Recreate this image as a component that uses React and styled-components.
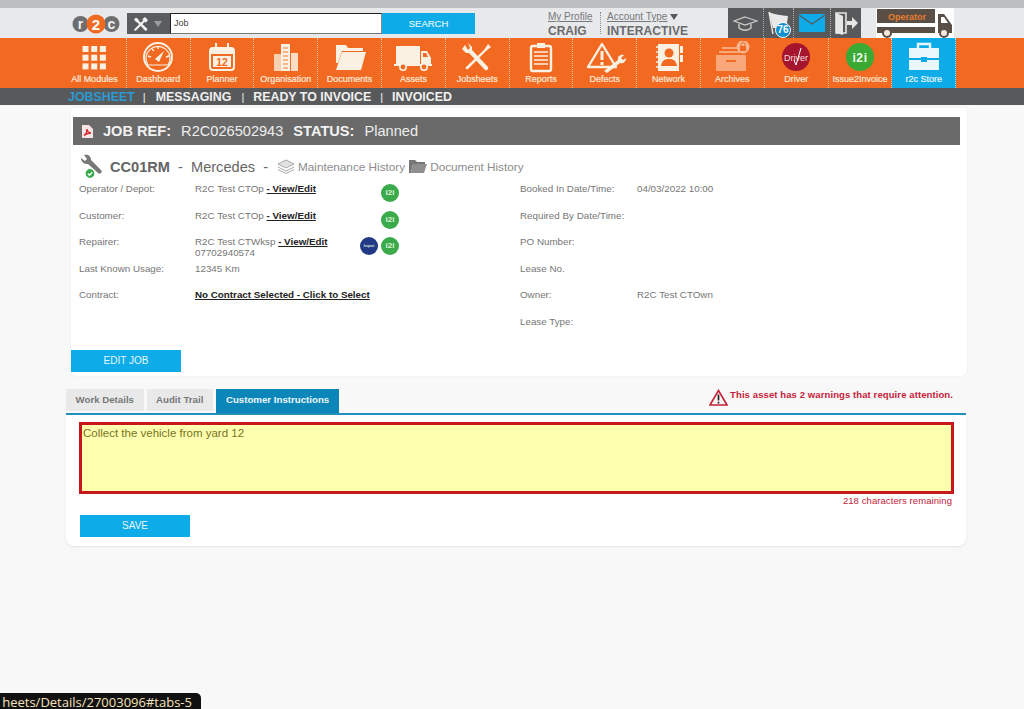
import React from "react";
import styled, { createGlobalStyle } from "styled-components";

const cream = "#fbf1e3";

const GlobalStyle = createGlobalStyle`
  html, body {
    margin: 0;
    padding: 0;
    background: #f8f8f8;
    font-family: "Liberation Sans", Arial, sans-serif;
    overflow: hidden;
  }
`;

const Page = styled.div`
  width: 1024px;
  height: 709px;
  position: relative;
  overflow: hidden;
  background: #f8f8f8;
`;

const TopStrip = styled.div`
  height: 8px;
  background: #bdbec1;
`;

const Header = styled.header`
  display: flex;
  align-items: flex-start;
  height: 30px;
  padding-left: 72px;
  background: #e8e9ea;
`;

const LogoSvg = styled.svg`
  width: 48px;
  height: 20px;
  margin-top: 6px;
  flex: none;
`;

const ToolPicker = styled.div`
  display: flex;
  align-items: center;
  gap: 5px;
  width: 43px;
  height: 21px;
  margin: 5px 0 0 7px;
  padding-left: 6px;
  box-sizing: border-box;
  background: #5b5c5e;
  flex: none;
`;

const Caret = styled.span`
  width: 0;
  height: 0;
  border-left: 4px solid transparent;
  border-right: 4px solid transparent;
  border-top: 6px solid ${(p) => p.$color || "#9b9c9e"};
`;

const SearchInput = styled.div`
  width: 212px;
  height: 21px;
  margin-top: 5px;
  padding-left: 3px;
  box-sizing: border-box;
  background: #fff;
  border: 1px solid #222;
  border-right-color: #888;
  border-bottom-color: #777;
  font-size: 9px;
  line-height: 18px;
  color: #444;
  flex: none;
`;

const SearchButton = styled.div`
  width: 93px;
  height: 21px;
  margin-top: 5px;
  background: #0dabe8;
  color: #dff4fc;
  font-size: 9.5px;
  line-height: 21px;
  text-align: center;
  -webkit-text-stroke: 0.2px currentColor;
  flex: none;
`;

const Account = styled.div`
  display: flex;
  flex-direction: column;
  width: ${(p) => p.$width}px;
  height: 22px;
  margin-top: 4px;
  margin-left: ${(p) => p.$left}px;
  padding-left: ${(p) => p.$pad || 0}px;
  border-left: ${(p) => (p.$line ? "1px dotted #888" : "none")};
  white-space: nowrap;
  flex: none;
`;

const AccountLink = styled.span`
  display: flex;
  align-items: center;
  gap: 3px;
  font-size: 10px;
  line-height: 10px;
  color: #77787a;
  text-decoration: underline;
`;

const AccountName = styled.span`
  margin-top: 2px;
  font-size: 12px;
  line-height: 14px;
  font-weight: bold;
  letter-spacing: ${(p) => p.$spacing || 0}px;
  color: #6a6b6d;
`;

const UserTools = styled.div`
  display: flex;
  align-items: center;
  width: 133px;
  height: 30px;
  margin-left: 40px;
  background: #58595b;
  flex: none;
`;

const UserTool = styled.div`
  position: relative;
  display: flex;
  align-items: center;
  justify-content: center;
  height: 30px;
  width: ${(p) => p.$width}px;
  border-right: ${(p) => (p.$line ? "1px dotted #aaa" : "none")};
  box-sizing: border-box;
`;

const CountBadge = styled.span`
  position: absolute;
  left: 11px;
  top: 14px;
  width: 16px;
  height: 16px;
  border-radius: 50%;
  background: #0d8fd0;
  border: 1px solid #fff;
  box-sizing: border-box;
  color: #fff;
  font-size: 10px;
  font-weight: bold;
  line-height: 14px;
  text-align: center;
`;

const RoleTruck = styled.svg`
  width: 78px;
  height: 30px;
  margin-left: 15px;
  flex: none;
  background: #fff;
`;

const Nav = styled.nav`
  display: flex;
  height: 50px;
  padding-left: 63px;
  background: #f26a21;
`;

const NavItem = styled.div`
  display: flex;
  flex-direction: column;
  align-items: center;
  width: 63.8px;
  box-sizing: border-box;
  border-right: 1px dotted rgba(255, 255, 255, 0.6);
  background: ${(p) => (p.$active ? "#0dabe8" : "transparent")};
`;

const NavIcon = styled.svg`
  width: 44px;
  height: 32px;
  margin-top: 3px;
  flex: none;
`;

const NavLabel = styled.span`
  margin-top: 1px;
  font-size: 9px;
  line-height: 11px;
  white-space: nowrap;
  color: ${(p) => (p.$active ? "#eaf8fd" : "#fde9dc")};
  -webkit-text-stroke: 0.2px currentColor;
`;

const SubNav = styled.div`
  display: flex;
  align-items: center;
  height: 17px;
  padding-left: 68px;
  background: #58595b;
  font-size: 12.4px;
  font-weight: bold;
  color: #f1f1f1;
`;

const SubLink = styled.span`
  color: ${(p) => (p.$active ? "#2b9ad2" : "#f1f1f1")};
`;

const SubSep = styled.span`
  font-size: 11px;
  font-weight: normal;
  margin: 1px ${(p) => p.$right}px 0 ${(p) => p.$left}px;
`;

const Card = styled.section`
  width: 896px;
  height: 268px;
  margin: 3px 0 0 71px;
  padding: 9px 0 0 2px;
  box-sizing: border-box;
  background: #fff;
  border-radius: 0 0 6px 6px;
  box-shadow: 0 0 2px #e6e6e6;
  display: flex;
  flex-direction: column;
`;

const JobBar = styled.div`
  display: flex;
  align-items: center;
  width: 887px;
  height: 28px;
  padding-left: 9px;
  box-sizing: border-box;
  background: #6a6a6a;
  color: #eee;
  font-size: 14.6px;
`;

const JobKey = styled.b`
  margin: 0 ${(p) => p.$right || 0}px 0 ${(p) => p.$left || 0}px;
  color: #f2f2f2;
`;

const Vehicle = styled.div`
  display: flex;
  align-items: center;
  height: 24px;
  margin: 10px 0 0 5px;
  color: #666;
  font-size: 14.6px;
`;

const Reg = styled.b`
  margin-left: 6px;
  color: #636466;
`;

const Plain = styled.span`
  margin-left: ${(p) => p.$left || 0}px;
  white-space: pre;
`;

const HistoryLink = styled.span`
  display: flex;
  align-items: center;
  gap: 3px;
  margin: -2px 0 0 ${(p) => p.$left}px;
  font-size: 11.75px;
  color: #8c8c8c;
`;

const Details = styled.div`
  display: grid;
  grid-template-columns: 441px 1fr;
  margin: 2px 0 0 6px;
`;

const Column = styled.div`
  display: flex;
  flex-direction: column;
`;

const Row = styled.div`
  display: grid;
  grid-template-columns: ${(p) => (p.$wide ? "117px 1fr" : "116px 165px 39px")};
  height: 26.6px;
  padding-top: 2px;
  box-sizing: border-box;
  font-size: 9.8px;
  line-height: 11px;
  color: #767676;
`;

const Value = styled.div`
  white-space: nowrap;
`;

const DetailLink = styled.a`
  color: #222;
  font-weight: bold;
  text-decoration: underline;
`;

const Badges = styled.div`
  display: flex;
  justify-content: flex-end;
  gap: 3px;
`;

const Badge = styled.span`
  display: block;
  width: 18px;
  height: 18px;
  margin-top: 1px;
  border-radius: 50%;
  background: ${(p) => p.$bg};
  color: #dff3dc;
  font-size: ${(p) => p.$size || 8}px;
  font-weight: bold;
  line-height: 18px;
  text-align: center;
  overflow: hidden;
`;

const ActionButton = styled.div`
  width: 110px;
  height: 22px;
  margin: ${(p) => p.$margin};
  background: #0dabe8;
  color: #e6f7fd;
  font-size: 10px;
  line-height: 22px;
  text-align: center;
`;

const TabBar = styled.div`
  display: flex;
  justify-content: space-between;
  width: 900px;
  height: 24px;
  margin: 13px 0 0 66px;
  border-bottom: 2px solid #1b8fb9;
`;

const Tabs = styled.div`
  display: flex;
  gap: 3px;
`;

const Tab = styled.div`
  height: ${(p) => (p.$active ? 24 : 22)}px;
  padding: 0 ${(p) => (p.$active ? 10 : 9.5)}px;
  background: ${(p) => (p.$active ? "#0a86b8" : "#e9e9e9")};
  color: ${(p) => (p.$active ? "#eef8fc" : "#77787a")};
  font-size: 9.7px;
  font-weight: bold;
  line-height: 22px;
`;

const Warning = styled.div`
  display: flex;
  align-items: flex-start;
  gap: 2px;
  margin-right: 13px;
  color: #c5223a;
  font-size: 9.5px;
  font-weight: bold;
  letter-spacing: 0.1px;
  line-height: 12px;
`;

const Panel = styled.section`
  width: 900px;
  height: 131px;
  margin-left: 66px;
  padding: 7px 12px 0 13px;
  box-sizing: border-box;
  background: #fff;
  border-radius: 0 0 8px 8px;
  box-shadow: 0 1px 2px #e6e6e6;
`;

const Notes = styled.div`
  height: 72px;
  padding: 1px;
  box-sizing: border-box;
  background: #ffffb0;
  border: 3px solid #c8161d;
  color: #74741f;
  font-size: 11.5px;
  line-height: 14px;
`;

const Remaining = styled.div`
  margin: 1px 2px 0 0;
  color: #c5223a;
  font-size: 9.5px;
  letter-spacing: 0.08px;
  line-height: 11px;
  text-align: right;
`;

const UrlTip = styled.div`
  position: absolute;
  left: 0;
  bottom: 0;
  display: flex;
  justify-content: flex-end;
  width: 201px;
  height: 16px;
  padding-right: 9px;
  box-sizing: border-box;
  overflow: hidden;
  background: #111;
  border-radius: 0 5px 0 0;
  color: #f6e3bd;
  font-family: "Open Sans", sans-serif;
  font-size: 13px;
  line-height: 18px;
  white-space: nowrap;
`;

const ToolsGlyph = ({ color, width = 16, height = 16 }) => (
  <svg width={width} height={height} viewBox="0 0 32 32" style={{ flex: "none" }}>
    <path d="M6 3l-4 4 4 5 3 1 15 16c2 2 6-1 4-4L12 10l-1-3z" fill={color} />
    <path d="M3 26L20 9l-1-3 5-4 6 6-4 5-3-1L6 29c-2 2-5-1-3-3z" fill={color} />
  </svg>
);

const PdfIcon = () => (
  <svg width="11" height="13" viewBox="0 0 11 13" style={{ flex: "none", marginRight: 10 }}>
    <path d="M0 0h7l4 4v9H0z" fill="#f7e4e4" />
    <path d="M2 10.5c2-1 3-3.5 3-6.5 0 2 1 3.5 4 4-3 0-5 1-7 2.5z" fill="none" stroke="#d8232a" strokeWidth="1.4" />
  </svg>
);

const WrenchIcon = () => (
  <svg width="26" height="26" viewBox="0 0 26 26" style={{ flex: "none" }}>
    <path d="M3 4l4 3 2-2-3-4c4-1 7 1 7 5l10 10c2 2-1 5-3 3L10 10C6 10 3 8 3 4z" fill="#77787a" />
    <circle cx="12" cy="19.5" r="5" fill="#35a84a" stroke="#fff" strokeWidth="1.2" />
    <path d="M9.8 19.5l1.7 1.7 2.8-3" fill="none" stroke="#fff" strokeWidth="1.3" />
  </svg>
);

const StackIcon = () => (
  <svg width="18" height="15" viewBox="0 0 18 15">
    <path d="M9 1l8 4-8 4-8-4z" fill="#e2e2e2" stroke="#a8a8a8" />
    <path d="M1 8l8 4 8-4M1 10.5l8 4 8-4" fill="none" stroke="#a8a8a8" />
  </svg>
);

const FolderIcon = () => (
  <svg width="18" height="15" viewBox="0 0 18 15">
    <path d="M0 1h6l2 2h8v2H4L2 14H0z" fill="#777" />
    <path d="M4 5h14l-3 9H2z" fill="#8f8f8f" />
  </svg>
);

const WarnIcon = () => (
  <svg width="19" height="17" viewBox="0 0 19 17" style={{ flex: "none" }}>
    <path d="M9.5 1.5L18 16H1z" fill="#fdf7f7" stroke="#c5223a" strokeWidth="1.6" />
    <path d="M9.5 5.5v6M9.5 12.8v1.8" stroke="#222" strokeWidth="1.7" />
  </svg>
);

const moduleIcons = {
  modules: (
    <>
      {[0, 1, 2].flatMap((r) =>
        [0, 1, 2].map((c) => <rect key={`${r}${c}`} x={10.5 + c * 8.7} y={7 + r * 8.7} width="6" height="6" fill={cream} />)
      )}
    </>
  ),
  dashboard: (
    <>
      <circle cx="22" cy="18" r="14" fill="none" stroke={cream} strokeWidth="2" />
      <path d="M12 26a12 12 0 1 1 20 0z" fill="none" stroke={cream} strokeWidth="1.2" />
      <path d="M19 20l9-8-5 11z" fill={cream} />
      <path d="M12 17l3 1M16 10l2 2M22 7v3M33 17l-3 1" stroke={cream} strokeWidth="1.4" />
    </>
  ),
  planner: (
    <>
      <rect x="10" y="9" width="24" height="22" rx="3" fill="none" stroke={cream} strokeWidth="2" />
      <rect x="10" y="9" width="24" height="6" fill={cream} />
      <path d="M16 4v7M28 4v7" stroke={cream} strokeWidth="2" />
      <rect x="13" y="17" width="18" height="11" fill={cream} />
      <text x="22" y="26.5" textAnchor="middle" fontFamily="Liberation Sans" fontSize="10.5" fontWeight="bold" fill="#f26a21">12</text>
    </>
  ),
  organisation: (
    <>
      <rect x="10" y="15" width="7" height="17" fill={cream} opacity=".75" />
      <rect x="17" y="5" width="9" height="27" fill={cream} />
      <rect x="27" y="14" width="7" height="18" fill={cream} opacity=".85" />
      <path d="M19 9h5M19 13h5M19 17h5M19 21h5M19 25h5M19 29h5" stroke="#f5a26f" strokeWidth="1.3" />
    </>
  ),
  documents: (
    <>
      <path d="M8 6h10l2 3h15v3H14l-4 12H8z" fill={cream} />
      <path d="M14 13h24l-5 18H8z" fill={cream} />
    </>
  ),
  assets: (
    <>
      <rect x="5" y="7" width="24" height="18" fill={cream} />
      <path d="M30 12h6l4 7v7H30z" fill={cream} />
      <path d="M32 14h3l2 4h-5z" fill="#f26a21" />
      <rect x="3" y="25" width="38" height="2" fill={cream} />
      <circle cx="12" cy="28" r="3.2" fill="#f26a21" stroke={cream} strokeWidth="1.6" />
      <circle cx="33" cy="28" r="3.2" fill="#f26a21" stroke={cream} strokeWidth="1.6" />
    </>
  ),
  jobsheets: (
    <>
      <path d="M10 6l-3 4 4 4 3 0 16 17c2 1 4-1 3-3L17 11l0-3-4-4 2 5-2 2z" fill={cream} />
      <path d="M11 28L29 11l4-6 3 3-5 4-18 18c-2 1-3-1-2-2z" fill={cream} />
    </>
  ),
  reports: (
    <>
      <rect x="12" y="7" width="20" height="25" rx="2" fill="none" stroke={cream} strokeWidth="2.4" />
      <rect x="18" y="4" width="8" height="5" fill={cream} />
      <path d="M15 13h14M15 17h14M15 21h14M15 25h14" stroke={cream} strokeWidth="1.3" />
    </>
  ),
  defects: (
    <>
      <path d="M19 5L33 28H5z" fill="none" stroke={cream} strokeWidth="2.4" strokeLinejoin="round" />
      <path d="M19 12v9M19 23v3" stroke={cream} strokeWidth="3" />
      <path d="M21 32l14-11c-1-3 2-6 6-5l-3 3 2 2 3-2c0 4-3 6-6 5L24 34z" fill={cream} />
    </>
  ),
  network: (
    <>
      <rect x="11" y="5" width="21" height="27" fill={cream} />
      <path d="M9 8h5M9 13h5M9 18h5M9 23h5M9 28h5" stroke={cream} strokeWidth="1.6" />
      <path d="M33 7h3v7h-3zM33 16h3v7h-3z" fill={cream} />
      <circle cx="22" cy="14" r="4.5" fill="#f26a21" />
      <path d="M14 27c1-6 4-7 8-7s7 1 8 7z" fill="#f26a21" />
    </>
  ),
  archives: (
    <>
      <g fill="#f8a77a">
        <path d="M12 8h20v2H12zM9 12h24v2H9z" />
        <path d="M6 16h30v16H6z" />
      </g>
      <rect x="16" y="21" width="10" height="2" fill="#f26a21" />
      <circle cx="33" cy="8" r="6.5" fill="#f8b591" />
      <rect x="30" y="7" width="6" height="5" fill="#f26a21" />
      <path d="M31 7V5.5a2 2 0 0 1 4 0V7" stroke="#f26a21" fill="none" />
    </>
  ),
  driver: (
    <>
      <circle cx="22" cy="18" r="14" fill="#a5152e" />
      <text x="22" y="21.5" textAnchor="middle" fontFamily="Liberation Sans" fontSize="9" fill="#f7dcdc">Driver</text>
      <path d="M20 21l2 5 5-17" fill="none" stroke="#fff" strokeWidth="1" />
    </>
  ),
  i2i: (
    <>
      <circle cx="22" cy="18" r="14" fill="#3aaa35" />
      <text x="22" y="22.5" textAnchor="middle" fontFamily="Liberation Sans" fontSize="12" fontWeight="bold" letterSpacing="0.6" fill="#eef8ea">i2i</text>
    </>
  ),
  store: (
    <>
      <path d="M16 9V5h12v4" fill="none" stroke="#eaf8fd" strokeWidth="2.4" />
      <path d="M7 9h30v10H25v-1h-6v1H7z" fill="#eaf8fd" />
      <path d="M7 21h12v2h6v-2h12v10H7z" fill="#eaf8fd" />
    </>
  ),
};

const modules = [
  ["modules", "All Modules"],
  ["dashboard", "Dashboard"],
  ["planner", "Planner"],
  ["organisation", "Organisation"],
  ["documents", "Documents"],
  ["assets", "Assets"],
  ["jobsheets", "Jobsheets"],
  ["reports", "Reports"],
  ["defects", "Defects"],
  ["network", "Network"],
  ["archives", "Archives"],
  ["driver", "Driver"],
  ["i2i", "Issue2Invoice"],
  ["store", "r2c Store"],
];

const I2i = () => <Badge $bg="#3aaa4a">i2i</Badge>;

const leftRows = [
  { label: "Operator / Depot:", name: "R2C Test CTOp", badges: <I2i /> },
  { label: "Customer:", name: "R2C Test CTOp", badges: <I2i /> },
  {
    label: "Repairer:",
    name: "R2C Test CTWksp",
    phone: "07702940574",
    badges: (
      <>
        <Badge $bg="#223a86" $size={3}>Inspect</Badge>
        <I2i />
      </>
    ),
  },
  { label: "Last Known Usage:", text: "12345 Km" },
  { label: "Contract:", contract: "No Contract Selected - Click to Select" },
];

const rightRows = [
  ["Booked In Date/Time:", "04/03/2022 10:00"],
  ["Required By Date/Time:", ""],
  ["PO Number:", ""],
  ["Lease No.", ""],
  ["Owner:", "R2C Test CTOwn"],
  ["Lease Type:", ""],
];

const App = () => {
  return (
    <Page>
      <GlobalStyle />
      <TopStrip />
      <Header>
        <LogoSvg viewBox="0 0 48 20">
          <circle cx="8.5" cy="10" r="8" fill="#6d6e70" />
          <circle cx="39.5" cy="10" r="8" fill="#6d6e70" />
          <circle cx="24" cy="10" r="9.5" fill="#f26a21" />
          <text x="8.5" y="14.5" textAnchor="middle" fontFamily="Liberation Sans" fontSize="14" fontWeight="bold" fill="#f2f2f2">r</text>
          <text x="24" y="15.5" textAnchor="middle" fontFamily="Liberation Sans" fontSize="15" fontWeight="bold" fill="#fff">2</text>
          <text x="39.5" y="14.5" textAnchor="middle" fontFamily="Liberation Sans" fontSize="14" fontWeight="bold" fill="#f2f2f2">c</text>
        </LogoSvg>
        <ToolPicker>
          <ToolsGlyph color="#f2f2f2" />
          <Caret />
        </ToolPicker>
        <SearchInput>Job</SearchInput>
        <SearchButton>SEARCH</SearchButton>
        <Account $left={73} $width={44}>
          <AccountLink>My Profile</AccountLink>
          <AccountName>CRAIG</AccountName>
        </Account>
        <Account $left={8} $pad={6} $width={81} $line>
          <AccountLink>
            Account Type <Caret $color="#58595b" />
          </AccountLink>
          <AccountName $spacing={0.1}>INTERACTIVE</AccountName>
        </Account>
        <UserTools>
          <UserTool $width={36} $line>
            <svg width="25" height="17" viewBox="0 0 25 17">
              <path d="M12 2L24 6 12 10 1 6z" fill="none" stroke="#cfcfcf" strokeWidth="1.3" />
              <path d="M6 9v4c3 3 9 3 12 0V9" fill="none" stroke="#cfcfcf" strokeWidth="1.3" />
            </svg>
          </UserTool>
          <UserTool $width={30} $line>
            <svg width="24" height="26" viewBox="0 0 24 26">
              <path d="M2 2c6 3 12 3 19 4l-2 14c-5-2-9-2-13-2z" fill="#e9e9e9" />
              <path d="M2 2l4 22" stroke="#e9e9e9" strokeWidth="1.4" />
            </svg>
            <CountBadge>76</CountBadge>
          </UserTool>
          <UserTool $width={37} $line>
            <svg width="26" height="18" viewBox="0 0 26 18">
              <rect width="26" height="18" fill="#0dabe8" />
              <path d="M0 1l13 9L26 1" fill="none" stroke="#58595b" strokeWidth="1.2" />
            </svg>
          </UserTool>
          <UserTool $width={30}>
            <svg width="24" height="24" viewBox="0 0 24 24">
              <path d="M2 2h10v20H2z" fill="none" stroke="#e6e6e6" strokeWidth="1.6" />
              <path d="M2 2l7 3v19l-7-2z" fill="#e6e6e6" />
              <path d="M13 10h5V6l6 6-6 6v-4h-5z" fill="#e6e6e6" />
            </svg>
          </UserTool>
        </UserTools>
        <RoleTruck viewBox="0 0 78 30">
          <rect x="1" y="1" width="58" height="14" fill="#5a4f47" />
          <text x="31" y="11.5" textAnchor="middle" fontFamily="Liberation Sans" fontSize="9" fontWeight="bold" fill="#e87b2c">Operator</text>
          <rect x="1" y="19" width="58" height="6" fill="#5a4f47" />
          <path d="M62 6h6l8 11v8H62z" fill="#5a4f47" />
          <path d="M65 9h3l4 6h-7z" fill="#fff" />
          <circle cx="11" cy="25" r="4" fill="#f3e9df" stroke="#5a4f47" strokeWidth="2" />
          <circle cx="68" cy="25" r="4" fill="#f3e9df" stroke="#5a4f47" strokeWidth="2" />
        </RoleTruck>
      </Header>

      <Nav>
        {modules.map(([key, label]) => (
          <NavItem key={key} $active={key === "store"}>
            <NavIcon viewBox="0 2 44 32">{moduleIcons[key]}</NavIcon>
            <NavLabel $active={key === "store"}>{label}</NavLabel>
          </NavItem>
        ))}
      </Nav>

      <SubNav>
        <SubLink $active>JOBSHEET</SubLink>
        <SubSep $left={8} $right={10}>|</SubSep>
        <SubLink>MESSAGING</SubLink>
        <SubSep $left={10} $right={9}>|</SubSep>
        <SubLink>READY TO INVOICE</SubLink>
        <SubSep $left={9} $right={9}>|</SubSep>
        <SubLink>INVOICED</SubLink>
      </SubNav>

      <Card>
        <JobBar>
          <PdfIcon />
          <JobKey $right={10}>JOB REF:</JobKey>
          R2C026502943
          <JobKey $left={10} $right={10}>STATUS:</JobKey>
          Planned
        </JobBar>
        <Vehicle>
          <WrenchIcon />
          <Reg>CC01RM</Reg>
          <Plain $left={8}>-  Mercedes  -</Plain>
          <HistoryLink $left={9}>
            <StackIcon />
            Maintenance History
          </HistoryLink>
          <HistoryLink $left={4}>
            <FolderIcon />
            Document History
          </HistoryLink>
        </Vehicle>
        <Details>
          <Column>
            {leftRows.map((row) => (
              <Row key={row.label}>
                <span>{row.label}</span>
                <Value>
                  {row.name && (
                    <>
                      {row.name} <DetailLink>- View/Edit</DetailLink>
                    </>
                  )}
                  {row.phone && <div>{row.phone}</div>}
                  {row.text}
                  {row.contract && <DetailLink>{row.contract}</DetailLink>}
                </Value>
                <Badges>{row.badges}</Badges>
              </Row>
            ))}
          </Column>
          <Column>
            {rightRows.map(([label, value]) => (
              <Row key={label} $wide>
                <span>{label}</span>
                <Value>{value}</Value>
              </Row>
            ))}
          </Column>
        </Details>
        <ActionButton $margin="9px 0 0 -2px">EDIT JOB</ActionButton>
      </Card>

      <TabBar>
        <Tabs>
          <Tab>Work Details</Tab>
          <Tab>Audit Trail</Tab>
          <Tab $active>Customer Instructions</Tab>
        </Tabs>
        <Warning>
          <WarnIcon />
          <span>This asset has 2 warnings that require attention.</span>
        </Warning>
      </TabBar>
      <Panel>
        <Notes>Collect the vehicle from yard 12</Notes>
        <Remaining>218 characters remaining</Remaining>
        <ActionButton $margin="9px 0 0 1px">SAVE</ActionButton>
      </Panel>

      <UrlTip>heets/Details/27003096#tabs-5</UrlTip>
    </Page>
  );
};

export default App;
